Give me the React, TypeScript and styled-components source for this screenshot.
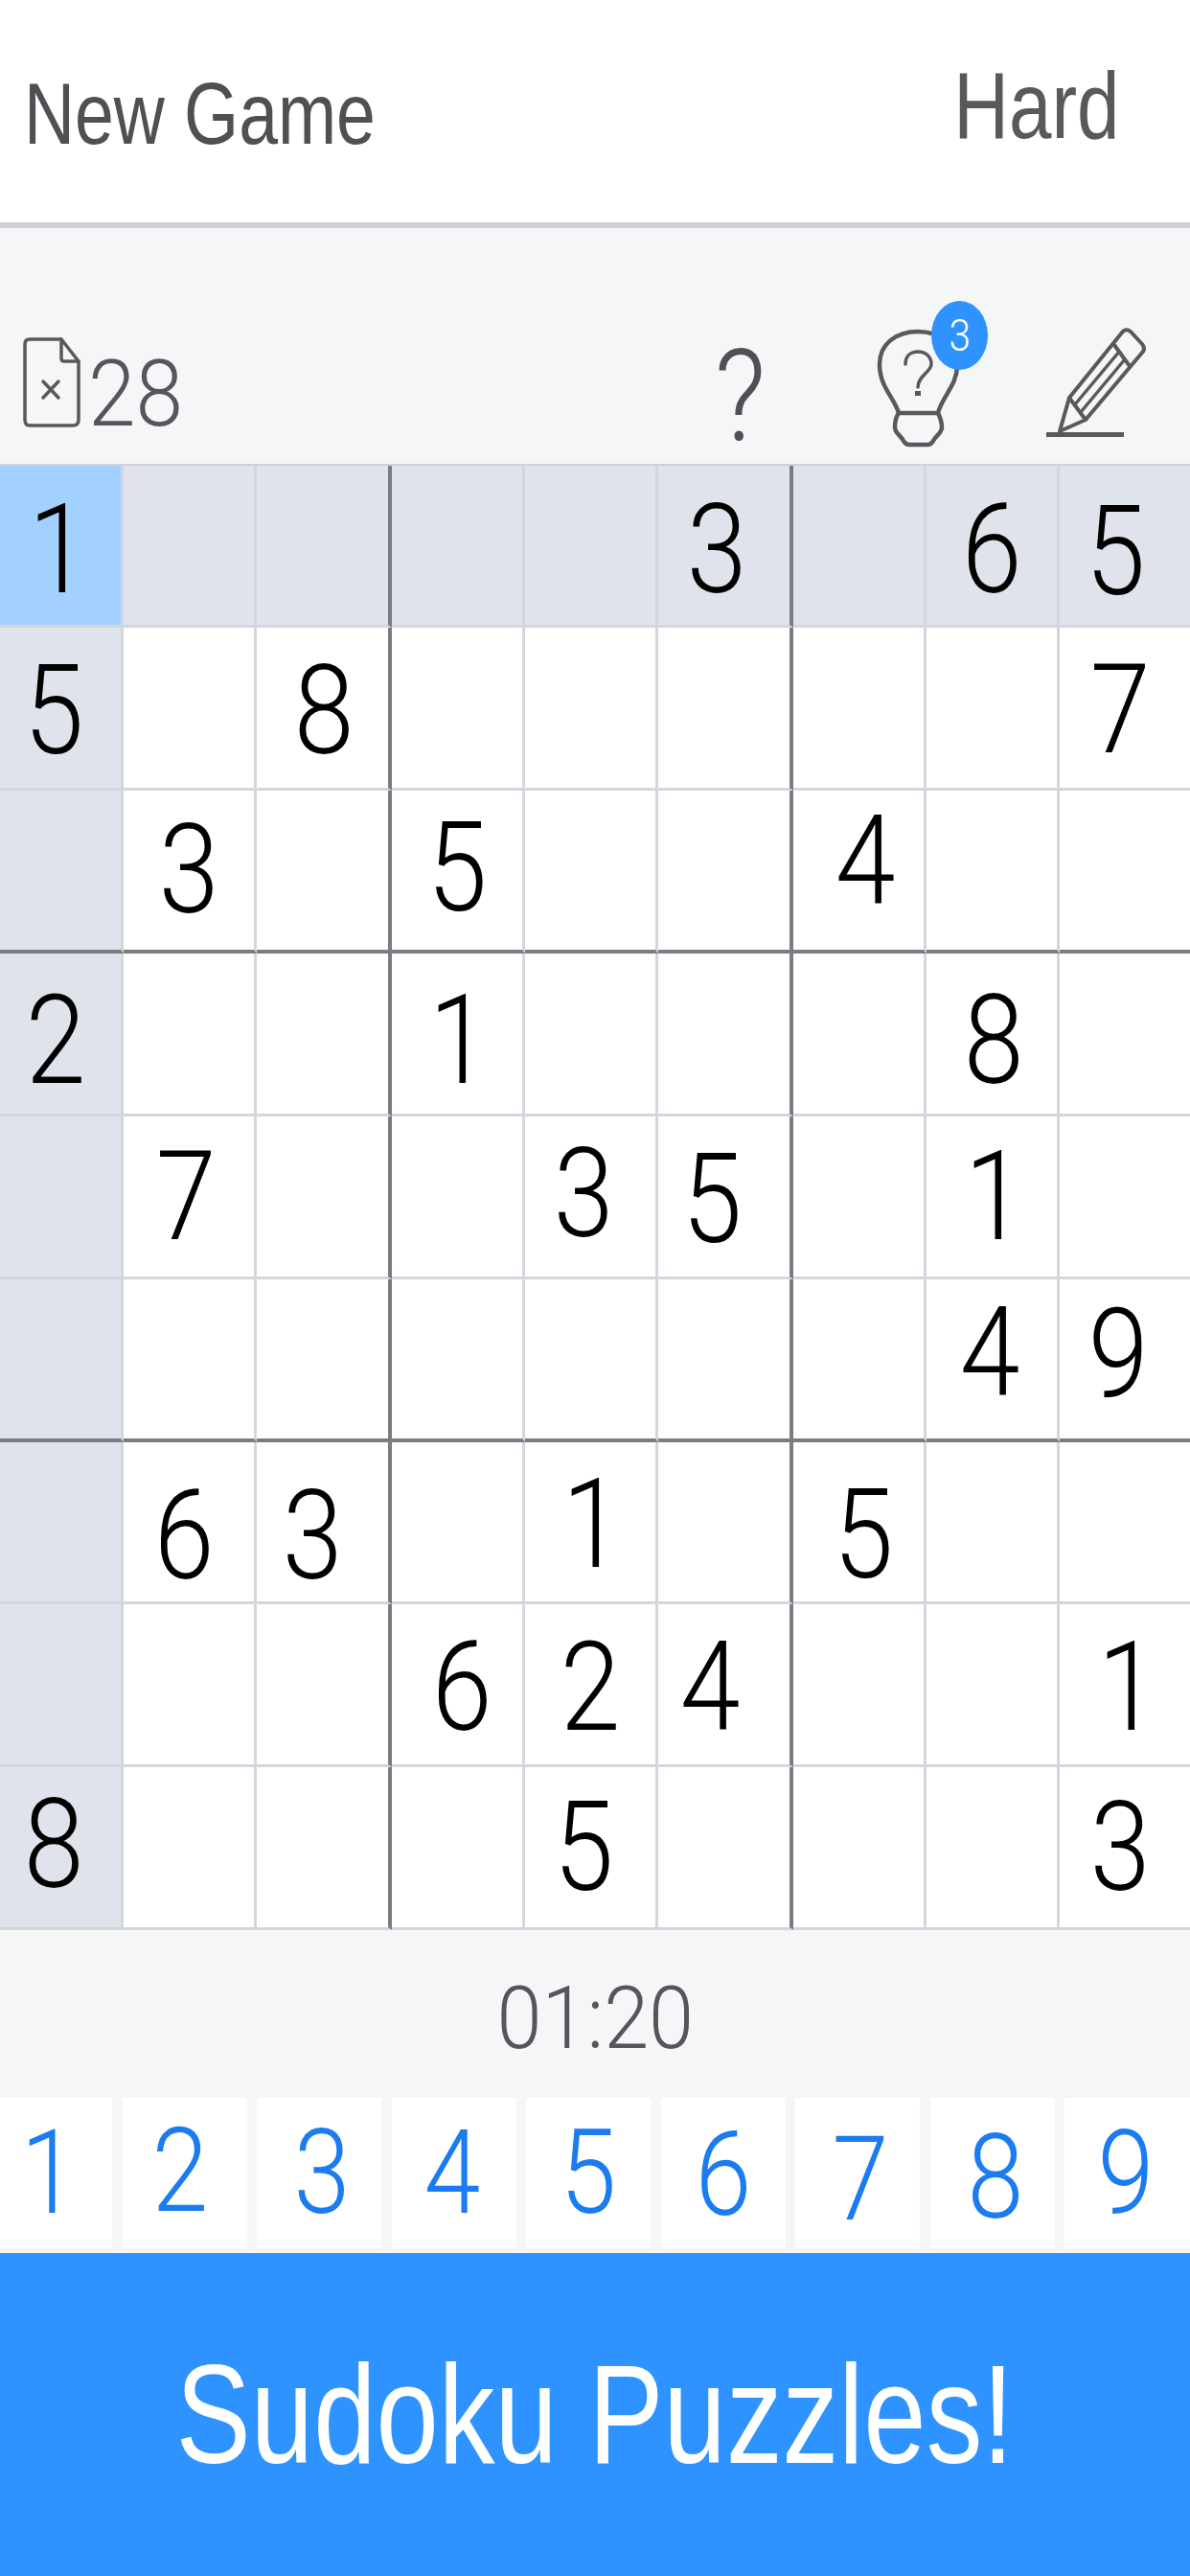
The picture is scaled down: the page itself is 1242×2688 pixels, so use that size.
import React from 'react';
import styled, { createGlobalStyle } from 'styled-components';

const GlobalStyle = createGlobalStyle`
  html, body {
    margin: 0;
    padding: 0;
    background: #f5f6f8;
  }
  * {
    box-sizing: border-box;
  }
`;

const Screen = styled.div`
  width: 1242px;
  height: 2688px;
  display: flex;
  flex-direction: column;
  background: #f5f6f8;
  font-family: 'Liberation Sans', Arial, sans-serif;
  overflow: hidden;
`;

const Header = styled.header`
  height: 238px;
  flex: none;
  display: flex;
  justify-content: space-between;
  background: #fff;
  border-bottom: 6px solid #d0d1d6;
  padding: 0 74px 0 25px;
`;

const HeaderLabel = styled.span<{ $size: number; $top: number; $origin: string; $color: string }>`
  display: block;
  margin-top: ${(p) => p.$top}px;
  font-size: ${(p) => p.$size}px;
  line-height: 1;
  color: ${(p) => p.$color};
  transform: scaleX(0.815);
  transform-origin: ${(p) => p.$origin} center;
  white-space: nowrap;
`;

const Toolbar = styled.div`
  height: 246px;
  flex: none;
  display: flex;
  align-items: flex-end;
  padding: 0 43px 0 24px;
`;

const Mistakes = styled.div`
  display: flex;
  align-items: flex-end;
  gap: 8px;
  margin-bottom: 38px;
  margin-right: auto;
`;

const Light = styled.span<{ $size: number; $color: string }>`
  display: block;
  font-family: Roboto, 'Liberation Sans', sans-serif;
  font-weight: 300;
  font-size: ${(p) => p.$size}px;
  line-height: 1;
  color: ${(p) => p.$color};
  transform: scaleX(0.88);
  white-space: nowrap;
`;

const MistakeCount = styled(Light)`
  transform: scaleX(0.93);
  transform-origin: left center;
  width: 100px;
  margin-bottom: -13px;
`;

const HelpMark = styled(Light)`
  margin-right: 110px;
  margin-bottom: 3px;
`;

const HintButton = styled.div`
  position: relative;
  width: 90px;
  height: 125px;
  margin-right: 86px;
  margin-bottom: 17px;
`;

const Badge = styled.div`
  position: absolute;
  left: 59px;
  top: -28px;
  width: 59px;
  height: 72px;
  border-radius: 50%;
  background: #2e93ff;
  display: flex;
  align-items: center;
  justify-content: center;
`;

const PencilButton = styled.div`
  width: 110px;
  height: 118px;
  margin-bottom: 26px;
`;

const IconSvg = styled.svg`
  display: block;
  fill: none;
  stroke: #58595b;
  stroke-linejoin: round;
  stroke-linecap: round;
`;

const Board = styled.div`
  flex: none;
  display: grid;
  grid-template-columns: 129px 139px 141px 139px 139px 141px 139px 139px 136px;
  grid-template-rows: 169px 170px 170px 170px 170px 170px 169px 170px 170px;
  border-top: 2px solid #d0d1d6;
  background: #fff;
`;

const Cell = styled.div<{ $tone: string; $thickRight: boolean; $thickBottom: boolean }>`
  display: flex;
  align-items: center;
  justify-content: center;
  background: ${(p) =>
    p.$tone === 'selected' ? '#a2d0ff' : p.$tone === 'peer' ? '#dfe3ec' : '#ffffff'};
  border-right: ${(p) => (p.$thickRight ? '4px solid #7b7c82' : '3px solid #d3d6dc')};
  border-bottom: ${(p) => (p.$thickBottom ? '4px solid #7b7c82' : '3px solid #d3d6dc')};
  &:nth-child(9n) {
    border-right: none;
  }
`;

// the glyphs in the shot don't sit dead centre, so each carries a small shift
const CellDigit = styled(Light)<{ $dx: number; $dy: number }>`
  transform: translate(${(p) => p.$dx}px, ${(p) => p.$dy}px) scaleX(0.87);
`;

const Timer = styled.div`
  height: 175px;
  flex: none;
  display: flex;
  align-items: center;
  justify-content: center;
`;

const TimerText = styled(Light)`
  margin-top: 10px;
  transform: scaleX(0.94);
`;

const NumberPad = styled.div`
  height: 157px;
  flex: none;
  display: grid;
  grid-template-columns: 117px repeat(7, 130px) 1fr;
  column-gap: 10.5px;
`;

const PadKey = styled.div`
  background: #fff;
  display: flex;
  align-items: center;
  justify-content: center;
`;

const Banner = styled.div`
  flex: 1;
  margin-top: 5px;
  background: #2e93ff;
  display: flex;
  align-items: center;
  justify-content: center;
`;

const BannerText = styled.span`
  font-size: 146px;
  line-height: 1;
  color: #fff;
  transform: scaleX(0.804);
  white-space: nowrap;
`;

type Given = [row: number, col: number, value: string, dx: number, dy: number];

const GIVENS: Given[] = [
  [0, 0, '1', -2, 5],
  [0, 5, '3', -7, 5],
  [0, 7, '6', 0, 5],
  [0, 8, '5', -10, 7],
  [1, 0, '5', -7, 3],
  [1, 2, '8', 2, 3],
  [1, 8, '7', -5, 2],
  [2, 1, '3', 0, 0],
  [2, 3, '5', 0, -2],
  [2, 6, '4', 7, -10],
  [3, 0, '2', -5, 7],
  [3, 3, '1', 2, 7],
  [3, 7, '8', 2, 7],
  [4, 1, '7', -3, 0],
  [4, 4, '3', -7, -3],
  [4, 5, '5', -12, 3],
  [4, 7, '1', 3, 0],
  [5, 7, '4', -2, -7],
  [5, 8, '9', -7, -5],
  [6, 1, '6', -5, 15],
  [6, 2, '3', -10, 15],
  [6, 4, '1', 2, 3],
  [6, 6, '5', 5, 14],
  [7, 3, '6', 5, 3],
  [7, 4, '2', 0, 3],
  [7, 5, '4', -14, 2],
  [7, 8, '1', 3, 3],
  [8, 0, '8', -7, -3],
  [8, 4, '5', -7, 0],
  [8, 8, '3', -5, 0],
];

const PAD: [string, number, number][] = [
  ['1', -8, 0],
  ['2', -5, -2],
  ['3', 3, 0],
  ['4', -2, 0],
  ['5', 0, 0],
  ['6', 0, 2],
  ['7', 3, 7],
  ['8', 3, 5],
  ['9', -2, 0],
];

const FileIcon = () => (
  <IconSvg width="60" height="94" viewBox="0 0 60 94" strokeWidth="3.5">
    <path d="M7 2 H40 L58 25 V86 Q58 92 52 92 H7 Q2 92 2 86 V7 Q2 2 7 2 Z" />
    <path d="M40 2 V22 Q40 25 43 25 H58" />
    <path d="M21 46 L37 63 M37 46 L21 63" />
  </IconSvg>
);

const BulbIcon = () => (
  <IconSvg width="90" height="125" viewBox="0 0 90 125" strokeWidth="4.5">
    <path d="M25 89 C20 72 5 62 5 38 C5 17 22 4 45 4 C68 4 86 18 86 40 C86 60 70 72 66 89 Z" />
    <path d="M25 89 C22 93 21 98 21 104 C21 110 27 112 30 118 Q32 122 36 122 H55 Q59 122 61 118 C64 112 70 110 70 104 C70 98 68 93 66 89" />
    <path d="M32 38 C32 29 38 25 45 25 C53 25 59 30 59 38 C59 46 45 50 45 62" strokeWidth="3.5" />
    <rect x="42" y="66" width="6" height="5" fill="#58595b" stroke="none" />
  </IconSvg>
);

const PencilIcon = () => (
  <IconSvg width="110" height="118" viewBox="0 0 110 118" strokeWidth="4">
    <path d="M27 75 L82 7 Q86 2 91 6 L103 19 Q107 24 103 28 L44 98 L17 110 Z" />
    <path d="M74 20 L90 42 M27 75 L44 98" />
    <path d="M33 82 L79 27 M39 90 L85 35" strokeWidth="3.5" />
    <rect x="3" y="111" width="81" height="5" fill="#58595b" stroke="none" />
  </IconSvg>
);

const findGiven = (r: number, c: number) => GIVENS.find((g) => g[0] === r && g[1] === c);

export default function App() {
  const cells = [];
  for (let r = 0; r < 9; r++) {
    for (let c = 0; c < 9; c++) {
      const given = findGiven(r, c);
      cells.push(
        <Cell
          key={`${r}-${c}`}
          $tone={r === 0 && c === 0 ? 'selected' : r === 0 || c === 0 ? 'peer' : 'plain'}
          $thickRight={c === 2 || c === 5}
          $thickBottom={r === 2 || r === 5}
        >
          {given && (
            <CellDigit $size={130} $color="#000" $dx={given[3]} $dy={given[4]}>
              {given[2]}
            </CellDigit>
          )}
        </Cell>,
      );
    }
  }

  return (
    <Screen>
      <GlobalStyle />
      <Header>
        <HeaderLabel $size={90} $top={74} $origin="left" $color="#4f5053">
          New Game
        </HeaderLabel>
        <HeaderLabel $size={98} $top={61} $origin="right" $color="#58595b">
          Hard
        </HeaderLabel>
      </Header>
      <Toolbar>
        <Mistakes>
          <FileIcon />
          <MistakeCount $size={96} $color="#55565a">
            28
          </MistakeCount>
        </Mistakes>
        <HelpMark $size={134} $color="#4f5053">
          ?
        </HelpMark>
        <HintButton>
          <BulbIcon />
          <Badge>
            <Light $size={46} $color="#fff">
              3
            </Light>
          </Badge>
        </HintButton>
        <PencilButton>
          <PencilIcon />
        </PencilButton>
      </Toolbar>
      <Board>{cells}</Board>
      <Timer>
        <TimerText $size={90} $color="#55565a">01:20</TimerText>
      </Timer>
      <NumberPad>
        {PAD.map(([n, dx, dy]) => (
          <PadKey key={n}>
            <CellDigit $size={122} $color="#1a7cf0" $dx={dx} $dy={dy}>
              {n}
            </CellDigit>
          </PadKey>
        ))}
      </NumberPad>
      <Banner>
        <BannerText>Sudoku Puzzles!</BannerText>
      </Banner>
    </Screen>
  );
}
